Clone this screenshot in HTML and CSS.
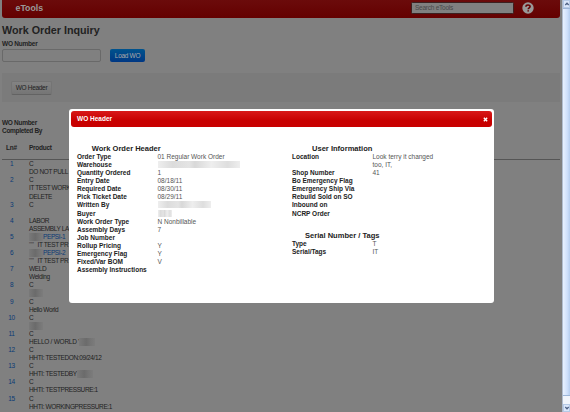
FILE: index.html
```html
<!DOCTYPE html>
<html lang="en">
<head>
<meta charset="utf-8">
<title>eTools</title>
<link rel="stylesheet" href="styles.css">
</head>
<body>
<div class="page">
  <header class="navbar">
    <span class="brand">eTools</span>
    <span class="search">Search eTools</span>
    <svg class="help" viewBox="0 0 12 12"><circle cx="6" cy="6" r="5.7" fill="#999"/><path d="M3.9 4.7C4 2.5 8.1 2.5 8.1 4.6C8.1 5.9 6.2 5.8 6.2 7.3M6.2 8.2V9.6" fill="none" stroke="#660000" stroke-width="1.6"/></svg>
  </header>
  <h1>Work Order Inquiry</h1>
  <div class="label">WO Number</div>
  <div class="form"><span class="input"></span><span class="load">Load WO</span></div>
  <div class="toolbar"><span class="btn">WO Header</span></div>
  <div class="summary"><div>WO Number</div><div>Completed By</div></div>
  <div class="thead"><span>Ln#</span><span>Product</span></div>
  <div class="lines">
    <a>1</a><p>C<br>DO NOT PULL</p>
    <a>2</a><p>C<br>IT TEST WORK<br>DELETE</p>
    <a>3</a><p>C<br>&nbsp;</p>
    <a>4</a><p>LABOR<br>ASSEMBLY LA</p>
    <a>5</a><p><i class="mask m14"></i><b>PEPSI-1</b><br><span class="quote">""'</span>IT TEST PR</p>
    <a>6</a><p><i class="mask m14"></i><b>PEPSI-2</b><br><span class="quote">""'</span>IT TEST PR</p>
    <a>7</a><p>WELD<br>Welding</p>
    <a>8</a><p>C<br><i class="mask m14"></i></p>
    <a>9</a><p>C<br>Hello World</p>
    <a>10</a><p>C<br><i class="mask m14"></i></p>
    <a>11</a><p>C<br><span class="wide">HELLO / WORLD '</span><i class="mask m16"></i></p>
    <a>12</a><p>C<br>HHTI: TESTEDON:09/24/12</p>
    <a>13</a><p>C<br>HHTI: TESTEDBY<i class="mask m16"></i></p>
    <a>14</a><p>C<br>HHTI: TESTPRESSURE:1</p>
    <a>15</a><p>C<br>HHTI: WORKINGPRESSURE:1</p>
  </div>
  <div class="foot"><span>Pre Price</span><span>ID Max Config</span><span>Alt Mfg Price</span><span>Alt Mfg Price</span><span>Alt</span></div>
</div>
<div class="scrollbar">
  <span class="arrow"><svg viewBox="0 0 7 7"><path d="M1.5 4.6L3.5 2.6L5.5 4.6" fill="none" stroke="#4d6185" stroke-width="1.5"/></svg></span>
  <span class="thumb"></span>
  <span class="track"></span>
  <span class="arrow"><svg viewBox="0 0 7 7"><path d="M1.5 2.4L3.5 4.4L5.5 2.4" fill="none" stroke="#4d6185" stroke-width="1.5"/></svg></span>
</div>
<section class="modal">
  <div class="bar"><span>WO Header</span><svg viewBox="0 0 6 6"><path d="M1 1L5 5M5 1L1 5" stroke="#fff" stroke-width="1.7"/></svg></div>
  <div class="cols">
    <div class="col">
      <h2 class="h-order">Work Order Header</h2>
      <dl>
        <dt>Order Type</dt><dd>01 Regular Work Order</dd>
        <dt>Warehouse</dt><dd><i class="blur w82"></i></dd>
        <dt>Quantity Ordered</dt><dd>1</dd>
        <dt>Entry Date</dt><dd>08/18/11</dd>
        <dt>Required Date</dt><dd>08/30/11</dd>
        <dt>Pick Ticket Date</dt><dd>08/29/11</dd>
        <dt>Written By</dt><dd><i class="blur w53"></i></dd>
        <dt>Buyer</dt><dd><i class="blur w14"></i></dd>
        <dt>Work Order Type</dt><dd>N Nonbillable</dd>
        <dt>Assembly Days</dt><dd>7</dd>
        <dt>Job Number</dt><dd></dd>
        <dt>Rollup Pricing</dt><dd>Y</dd>
        <dt>Emergency Flag</dt><dd>Y</dd>
        <dt>Fixed/Var BOM</dt><dd>V</dd>
        <dt>Assembly Instructions</dt><dd></dd>
      </dl>
    </div>
    <div class="col">
      <h2 class="h-user">User Information</h2>
      <dl>
        <dt>Location</dt><dd>Look terry it changed<br>too, IT,</dd>
        <dt>Shop Number</dt><dd>41</dd>
        <dt>Bo Emergency Flag</dt><dd></dd>
        <dt>Emergency Ship Via</dt><dd></dd>
        <dt>Rebuild Sold on SO</dt><dd></dd>
        <dt>Inbound on</dt><dd></dd>
        <dt>NCRP Order</dt><dd></dd>
      </dl>
      <h2 class="h-serial">Serial Number / Tags</h2>
      <dl>
        <dt>Type</dt><dd>T</dd>
        <dt>Serial/Tags</dt><dd>IT</dd>
      </dl>
    </div>
  </div>
</section>
</body>
</html>
```
FILE: styles.css
```css
* { box-sizing: border-box; }
html, body { margin: 0; height: 412px; overflow: hidden; }
body {
  display: flex;
  justify-content: space-between;
  position: relative;
  background: #808080;
  color: #222;
  font: 6.5px/8.08px "Liberation Sans", Arial, sans-serif;
}
h1, h2, p, dl, dd { margin: 0; }
.page { width: 560px; height: 412px; padding-left: 2px; overflow: hidden; white-space: nowrap; }

.navbar {
  display: flex;
  align-items: center;
  height: 18px;
  padding: 0 26px 2px 13.5px;
  border-radius: 0 0 3px 3px;
  background: linear-gradient(#6b0b0b, #640000);
}
.brand { flex: 1; font-size: 8.8px; font-weight: bold; color: #999; }
.search {
  width: 103px;
  height: 12px;
  margin-right: 8px;
  padding-left: 3px;
  border: 1px solid #3c2020;
  border-radius: 1.5px;
  background: #808080;
  color: #494949;
  line-height: 9.5px;
  letter-spacing: -.25px;
}
.help { width: 12px; height: 12px; }

h1 { margin-top: 6px; font-size: 10.75px; line-height: 13px; }
.label { margin-top: 2.5px; font-weight: bold; letter-spacing: -.22px; }
.form { display: flex; gap: 9px; margin-top: 1.5px; height: 13px; }
.input { width: 99px; border: 1px solid #696969; border-radius: 2px; }
.load {
  width: 35px;
  border-radius: 2px;
  background: linear-gradient(#00538d, #003783);
  color: #aaa;
  line-height: 13px;
  text-align: center;
  letter-spacing: -.3px;
}
.toolbar { height: 29px; margin-top: 11px; padding: 8px 9px; background: #7b7b7b; }
.btn {
  display: block;
  width: 41px;
  height: 14px;
  border: 1px solid #747474;
  border-bottom-color: #636363;
  border-radius: 2px;
  background: linear-gradient(#838383, #757575);
  line-height: 12.5px;
  text-align: center;
  letter-spacing: -.3px;
}
.summary { margin-top: 17px; font-weight: bold; letter-spacing: -.3px; }
.thead, .lines { display: grid; grid-template-columns: 27px 1fr; }
.thead {
  height: 25px;
  padding-top: 8.5px;
  border-bottom: 1px solid #555;
  font-weight: bold;
  letter-spacing: -.28px;
}
.thead span:first-child { padding-left: 4px; }
.lines { letter-spacing: -.38px; }
.lines a { width: 19px; text-align: center; }
.lines a, .lines b { color: #0a3a75; font-weight: normal; }
.wide { letter-spacing: -.25px; }
.quote { display: inline-block; width: 8.5px; color: #444; }
.mask {
  display: inline-block;
  height: 8px;
  vertical-align: top;
  background: linear-gradient(90deg, #797979, #6b6b6b 45%, #747474 70%, #7c7c7c);
}
.m14 { width: 14px; }
.m16 { width: 16px; }
.foot { display: grid; grid-template-columns: 85px 108px 110px 108px 1fr; }

.scrollbar {
  display: flex;
  flex-direction: column;
  width: 8px;
  border-left: 1px solid #b0bccd;
  background: #f0f4fb;
}
.arrow { display: block; height: 8px; border: 1px solid #b5c9e6; background: #d9e6fa; }
.arrow svg { display: block; width: 6px; height: 6px; }
.thumb {
  height: 388px;
  border: solid #9bb5d8;
  border-width: 1px 0;
  background: linear-gradient(90deg, #e8f1ff, #cfe0fb 60%, #b5cdee);
}
.track { height: 8px; }

.modal {
  position: absolute;
  left: 69px;
  top: 109px;
  width: 425px;
  height: 194px;
  padding: 2px;
  border-radius: 3px;
  background: #fff;
}
.bar {
  display: flex;
  align-items: center;
  justify-content: space-between;
  height: 16px;
  padding: 0 4px 0 6px;
  border-radius: 3px;
  background: linear-gradient(#d81919, #c80000 60%);
  color: #fff;
  font-weight: bold;
}
.bar svg { width: 5px; height: 5px; }
.cols { display: grid; grid-template-columns: 215px 1fr; padding: 17px 0 0 6px; white-space: nowrap; }
h2 { height: 9px; font-size: 7.55px; line-height: 9px; }
.h-order { padding-left: 14.7px; }
.h-user { padding-left: 20px; }
.h-serial { margin-top: 13.5px; padding-left: 13px; }
dl { display: grid; grid-template-columns: 80.5px 1fr; }
dt { font-weight: bold; }
dd { min-height: 8.08px; color: #555; }
.blur {
  display: block;
  height: 7px;
  background: linear-gradient(90deg, #eee, #dcdcdc 18%, #e4e4e4 38%, #d8d8d8 45%, #eee 65%, #dedede 85%, #eee);
}
.w82 { width: 82px; }
.w53 { width: 53px; }
.w14 { width: 14px; }
```
